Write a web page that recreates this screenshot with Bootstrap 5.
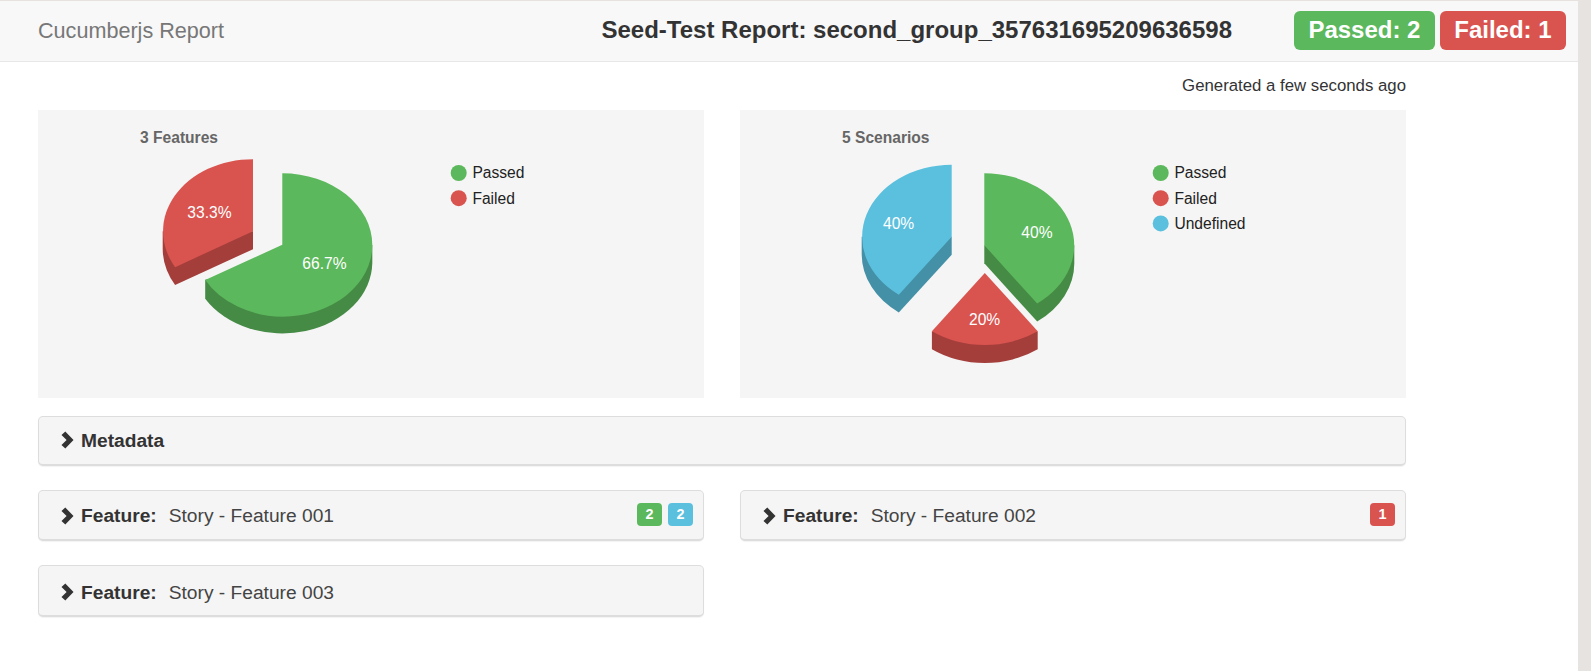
<!DOCTYPE html>
<html lang="en">
<head>
<meta charset="utf-8">
<meta name="viewport" content="width=device-width, initial-scale=1">
<title>Cucumberjs Report</title>
<link href="https://cdn.jsdelivr.net/npm/bootstrap@5.3.0/dist/css/bootstrap.min.css" rel="stylesheet">
<style>
  :root { --pass: #5cb85c; --fail: #d9534f; --undef: #5bc0de; }
  body { font-family: "Liberation Sans", Arial, sans-serif; font-size: 16.8px; line-height: 24px; color: #333; background: #e7e3e0; overflow: hidden; }
  .page { width: 1578px; height: 671px; }
  .topbar { height: 62px; background: #f8f8f8; border-top: 1px solid #e7e2df; border-bottom: 1px solid #e7e7e7; padding: 0 12px 1px 38px; }
  .brand { font-size: 21.6px; color: #777; }
  .report-title { font-size: 24px; font-weight: 700; margin-right: 62px; padding-bottom: 2px; }
  .big-label { font-size: 24px; line-height: 24px; font-weight: 700; color: #fff; border-radius: 6px; padding: 7px 14.4px 8px; }
  .big-label + .big-label { margin-left: 5px; }
  .bg-pass { background: var(--pass); } .bg-fail { background: var(--fail); } .bg-undef { background: var(--undef); }
  .content { width: 1368px; margin-left: 38px; }
  .generated { height: 48px; padding-top: 12px; }
  .tiles { display: grid; grid-template-columns: 666px 666px; column-gap: 36px; }
  .features { margin-top: 24px; row-gap: 24px; }
  .chart { height: 288px; background: #f5f5f5; }
  .chart svg { display: block; }
  .chart text { font-size: 15.6px; fill: #222; }
  .chart .heading { font-weight: 700; fill: #666; }
  .chart .pct { fill: #fff; }
  .report-panel { height: 50px; background: #f5f5f5; border: 1px solid #ddd; border-bottom-width: 2px; border-radius: 5px; box-shadow: 0 1px 1px rgba(0,0,0,.05); padding: 0 10px 0 22px; font-size: 19.2px; }
  .metadata { margin-top: 18px; }
  .feature-panel { height: 51px; padding-top: 2px; }
  .feature-tall { height: 52px; padding-top: 4px; }
  .story { margin-left: 12px; color: #444; }
  .chev { width: 13px; height: 18px; margin: 0 7px 1px 0; }
  .small-label { width: 25px; height: 23px; line-height: 22px; font-size: 14.4px; font-weight: 700; color: #fff; text-align: center; border-radius: 4px; margin: 0 0 3px 6px; }
</style>
</head>
<body>
<svg class="d-none">
  <symbol id="chevron" viewBox="0 0 13 18"><path d="M4.3 .5 12.5 9 4.3 17.5.5 14.1 5.6 9 .5 3.9Z" fill="#333"/></symbol>
</svg>
<div class="page bg-white">
  <nav class="topbar d-flex align-items-center">
    <span class="brand me-auto">Cucumberjs Report</span>
    <span class="report-title">Seed-Test Report: second_group_357631695209636598</span>
    <span class="big-label bg-pass">Passed: 2</span>
    <span class="big-label bg-fail">Failed: 1</span>
  </nav>
  <main class="content">
    <div class="generated text-end">Generated a few seconds ago</div>
    <div class="tiles">
      <div class="chart">
        <svg width="666" height="288">
          <text class="heading" x="102" y="33">3 Features</text>
          <path fill="#a33e3b" d="M124.7 121.2V139.2A90 72 0 0 0 137.1 175L215 139.2V121.2Z"/>
          <path fill="var(--fail)" d="M215 121.2V49.2A90 72 0 0 0 137.1 157.2Z"/>
          <path fill="#458a45" d="M167.2 169.8V188.8A90 71.5 0 0 0 334.3 153V135Z"/>
          <path fill="var(--pass)" d="M244.3 134.8V63.3A90 71.7 0 0 1 334.3 135A90 71.7 0 0 1 244.3 206.7A90 71.7 0 0 1 167.2 170Z"/>
          <text class="pct" x="149.3" y="108">33.3%</text>
          <text class="pct" x="264.3" y="159">66.7%</text>
          <circle cx="420.7" cy="63" r="8" fill="var(--pass)"/><text x="434.4" y="68">Passed</text>
          <circle cx="420.7" cy="88.2" r="8" fill="var(--fail)"/><text x="434.4" y="94">Failed</text>
        </svg>
      </div>
      <div class="chart">
        <svg width="666" height="288">
          <text class="heading" x="102" y="33">5 Scenarios</text>
          <path fill="#4490a7" d="M121.7 126.7V144.7A90 72 0 0 0 158.8 202.4L211.7 144.7V126.7Z"/>
          <path fill="var(--undef)" d="M211.7 126.7V54.7A90 72 0 0 0 158.8 184.7Z"/>
          <path fill="#458a45" d="M244.3 135.3V153.3L297.2 211.5A90 72 0 0 0 334.3 153.3V135.3Z"/>
          <path fill="var(--pass)" d="M244.3 135.3V63.3A90 72 0 0 1 297.2 193.5Z"/>
          <path fill="#a33e3b" d="M191.9 221.2V239.2A90 72 0 0 0 297.7 239.2V221.2Z"/>
          <path fill="var(--fail)" d="M244.8 163L297.7 221.2A90 72 0 0 1 191.9 221.2Z"/>
          <text class="pct" x="143" y="119">40%</text>
          <text class="pct" x="281.3" y="128">40%</text>
          <text class="pct" x="229" y="215">20%</text>
          <circle cx="420.7" cy="63" r="8" fill="var(--pass)"/><text x="434.4" y="68">Passed</text>
          <circle cx="420.7" cy="88.2" r="8" fill="var(--fail)"/><text x="434.4" y="94">Failed</text>
          <circle cx="420.7" cy="113.4" r="8" fill="var(--undef)"/><text x="434.4" y="119">Undefined</text>
        </svg>
      </div>
    </div>
    <div class="report-panel metadata d-flex align-items-center">
      <svg class="chev"><use href="#chevron"/></svg><b>Metadata</b>
    </div>
    <div class="tiles features">
      <div class="report-panel feature-panel d-flex align-items-center">
        <svg class="chev"><use href="#chevron"/></svg><b>Feature:</b><span class="story me-auto">Story - Feature 001</span>
        <span class="small-label bg-pass">2</span><span class="small-label bg-undef">2</span>
      </div>
      <div class="report-panel feature-panel d-flex align-items-center">
        <svg class="chev"><use href="#chevron"/></svg><b>Feature:</b><span class="story me-auto">Story - Feature 002</span>
        <span class="small-label bg-fail">1</span>
      </div>
      <div class="report-panel feature-panel feature-tall d-flex align-items-center">
        <svg class="chev"><use href="#chevron"/></svg><b>Feature:</b><span class="story me-auto">Story - Feature 003</span>
      </div>
    </div>
  </main>
</div>
<script src="https://cdn.jsdelivr.net/npm/bootstrap@5.3.0/dist/js/bootstrap.bundle.min.js"></script>
</body>
</html>
